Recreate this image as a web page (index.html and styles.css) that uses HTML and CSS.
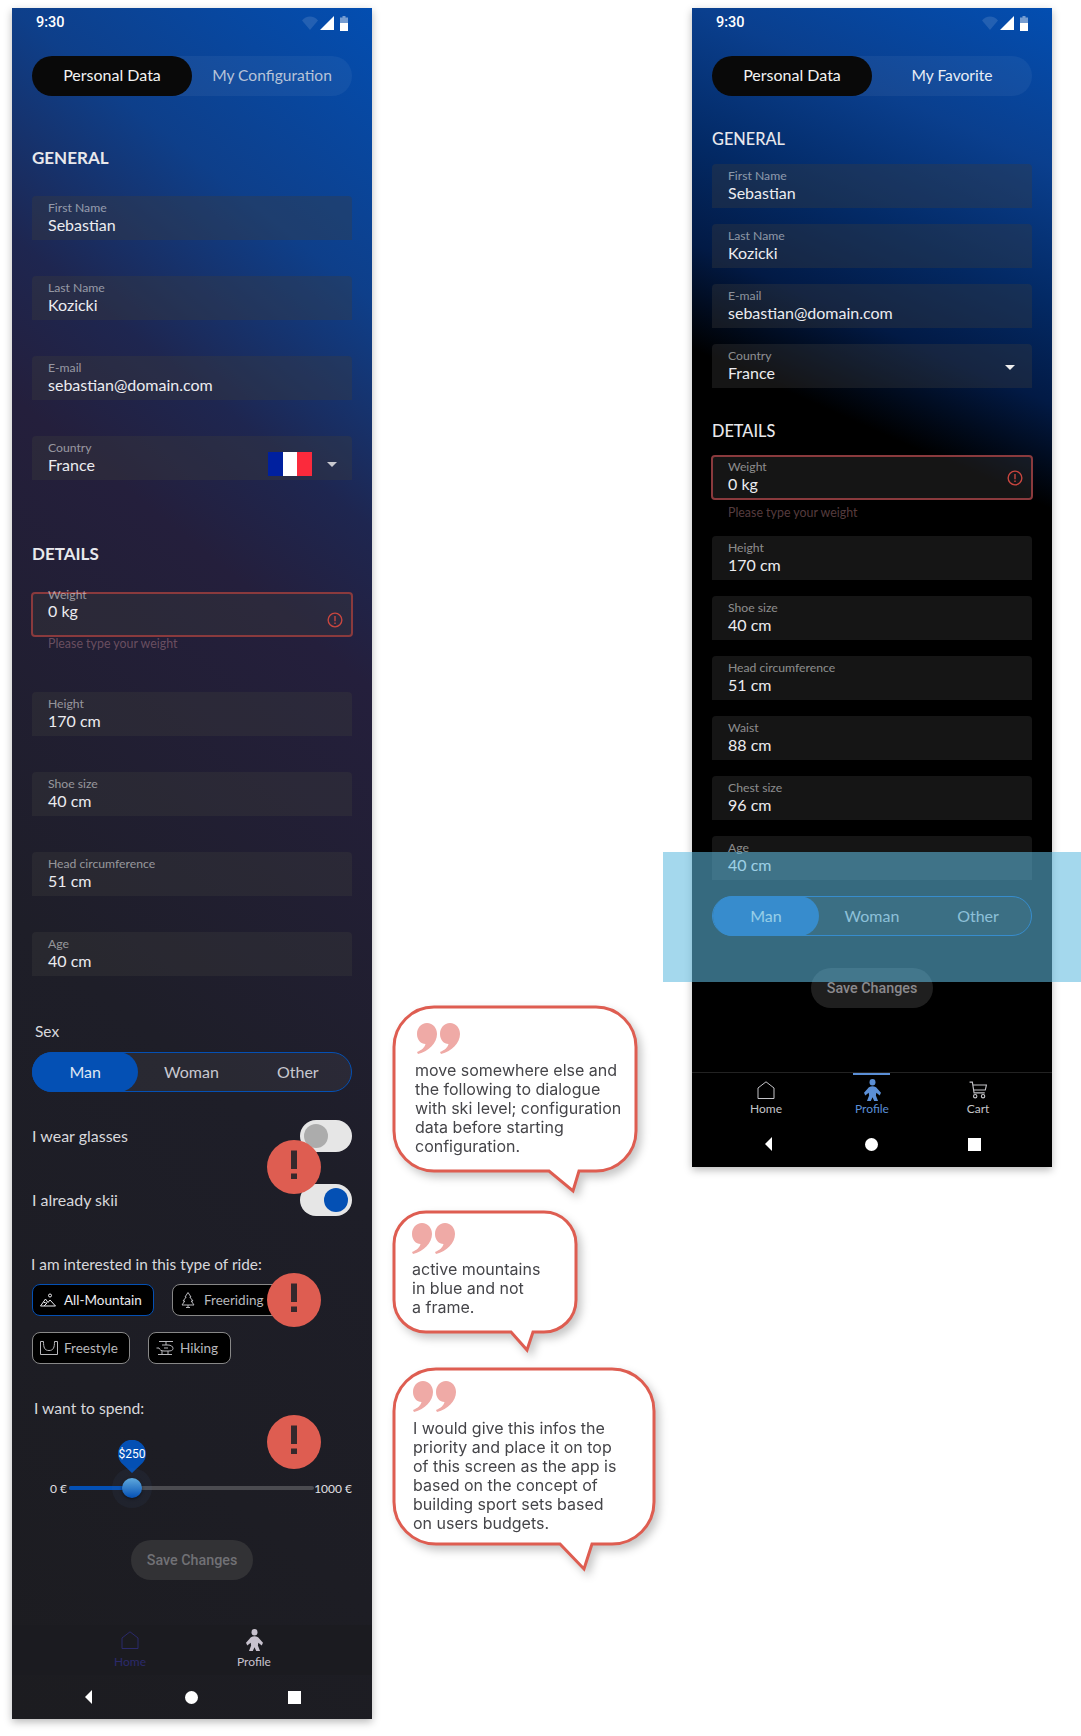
FILE: index.html
```html
<!DOCTYPE html>
<html lang="en">
<head>
<meta charset="utf-8">
<title>Profile screens</title>
<link rel="stylesheet" href="styles.css">
</head>
<body>
<svg class="defs" width="0" height="0" aria-hidden="true">
  <defs>
    <symbol id="wifi" viewBox="0 0 16 14"><path d="M0 4.500C2 2 5 .5 8 .5s6 1.500 8 4L8 14z" fill="#fff" fill-opacity=".12"/></symbol>
    <symbol id="signal" viewBox="0 0 14 14"><path d="M14 0V14H0z" fill="#fff"/></symbol>
    <symbol id="battery" viewBox="0 0 8 15"><path d="M2.500 0h3v1.500H8V7H0V1.500h2.500z" fill="#fff" fill-opacity=".45"/><path d="M0 7h8v8H0z" fill="#fff"/></symbol>
    <symbol id="home" viewBox="0 0 18 18"><path d="M1 17.500V7L9 .8 17 7v10.500z" fill="none" stroke="currentColor" stroke-width="1"/></symbol>
    <symbol id="person" viewBox="0 0 20 24" preserveAspectRatio="none"><circle cx="10" cy="3.500" r="3.500" fill="currentColor"/><path d="M10 8C7 8 5.500 9 4 11L0 15l1.500 3 4-3 .5 3-2.500 6H8l2-4 2 4h4.500L14 18l.5-3 4 3 1.500-3-4-4c-1.500-2-3-3-6-3z" fill="currentColor"/></symbol>
    <symbol id="cart" viewBox="0 0 16 16"><path d="M.5 1H3l1.500 9.500h9.500M3.500 3.500H15.500L14.500 8H4.200" fill="none" stroke="currentColor"/><circle cx="5.500" cy="13.500" r="1.500" fill="none" stroke="currentColor"/><circle cx="12.500" cy="13.500" r="1.500" fill="none" stroke="currentColor"/></symbol>
    <symbol id="alert" viewBox="0 0 14 14"><circle cx="7" cy="7" r="6" fill="none" stroke="currentColor" stroke-width="1.200"/><path d="M6.400 3.500h1.200v4.500H6.400zM6.400 9.200h1.200v1.300H6.400z" fill="currentColor"/></symbol>
    <symbol id="back" viewBox="0 0 7 14"><path d="M7 0V14L0 7z" fill="#fff"/></symbol>
    <symbol id="quote" viewBox="0 0 43 31"><path d="M10 0c6 0 10 5 10 11 0 9-8 17-19 20l-1-2c5-2 8-5 8.500-8C4 21 0 17 0 11 0 5 4 0 10 0zM33 0c6 0 10 5 10 11 0 9-8 17-19 20l-1-2c5-2 8-5 8.500-8C27 21 23 17 23 11c0-6 4-11 10-11z" fill="#efaaa6"/></symbol>
    <symbol id="mark" viewBox="0 0 54 54"><circle cx="27" cy="27" r="27" fill="#de5d51"/><path d="M24 10.500h6V29h-6zM24 33.500h6V39h-6z" fill="#36282c"/></symbol>
  </defs>
</svg>

<main class="canvas">
  <section class="phone phone-a">
    <div class="status"><span>9:30</span><span class="status-icons"><svg class="ic-wifi"><use href="#wifi"/></svg><svg class="ic-signal"><use href="#signal"/></svg><svg class="ic-batt"><use href="#battery"/></svg></span></div>
    <div class="tabs"><span class="tab tab-on">Personal Data</span><span class="tab tab-off">My Configuration</span></div>
    <h2 class="title title-bold title-a1">GENERAL</h2>
    <div class="fields fields-a">
      <div class="field"><span class="lab">First Name</span><span class="val">Sebastian</span></div>
      <div class="field"><span class="lab">Last Name</span><span class="val">Kozicki</span></div>
      <div class="field"><span class="lab">E-mail</span><span class="val">sebastian@domain.com</span></div>
      <div class="field field-row"><div><span class="lab">Country</span><span class="val">France</span></div><span class="flag"><i class="f1"></i><i class="f2"></i><i class="f3"></i></span><span class="caret"></span></div>
    </div>
    <h2 class="title title-bold title-a2">DETAILS</h2>
    <div class="fields fields-a">
      <div class="group">
        <div class="field field-err field-err-a"><span class="lab">Weight</span><span class="val">0 kg</span><svg class="err-ic err-ic-a"><use href="#alert"/></svg></div>
        <p class="err err-a">Please type your weight</p>
      </div>
      <div class="field"><span class="lab">Height</span><span class="val">170 cm</span></div>
      <div class="field"><span class="lab">Shoe size</span><span class="val">40 cm</span></div>
      <div class="field"><span class="lab">Head circumference</span><span class="val">51 cm</span></div>
      <div class="field"><span class="lab">Age</span><span class="val">40 cm</span></div>
    </div>
    <p class="text sex-label">Sex</p>
    <div class="segment"><span class="seg seg-on">Man</span><span class="seg">Woman</span><span class="seg">Other</span></div>
    <div class="switch-row row-1"><span class="text">I wear glasses</span><span class="toggle"><i class="knob knob-off"></i></span></div>
    <div class="switch-row row-2"><span class="text">I already skii</span><span class="toggle toggle-on"><i class="knob knob-on"></i></span></div>
    <p class="text ride-label">I am interested in this type of ride:</p>
    <div class="chips">
      <span class="chip chip-on"><svg class="chip-ic" viewBox="0 0 16 16" fill="none" stroke="currentColor"><path d="M.5 14 5.500 7l2.500 3.500L10 8l5.500 6zM3.500 10l2 1 1-1M4 14l3-3"/><circle cx="10" cy="3.500" r="1.500"/></svg>All-Mountain</span>
      <span class="chip chip-wide"><svg class="chip-ic" viewBox="0 0 16 16" fill="none" stroke="currentColor"><path d="M8 .5 11 5H9.800L13 9h-1.800l2.800 4H2l2.800-4H3l3.200-4H5zM8 13v3M6 15.500h4"/></svg>Freeriding</span>
      <span class="chip chip-3"><svg class="chip-ic chip-ic-l" viewBox="0 0 18 16" fill="none" stroke="currentColor"><path d="M.5 1.500v13h17v-13M.5 1.500h3c0 6 1 9 5.500 9s5.500-3 5.500-9h3"/></svg>Freestyle</span>
      <span class="chip chip-4"><svg class="chip-ic chip-ic-l" viewBox="0 0 18 16" fill="none" stroke="currentColor"><path d="M3 1.500h14M10 1.500V5M6 5h6c3 0 5 1.500 5 3.500S15 11 12 11H8C5 11 3.500 9.500 3 8H.5M8 8h4M2 14.500h14M6 11v3.500M12 11v3.500"/></svg>Hiking</span>
    </div>
    <p class="text spend-label">I want to spend:</p>
    <div class="slider">
      <span class="pin"><svg class="pin-shape" viewBox="0 0 28 33"><path d="M14 33 3.500 23A14 14 0 1 1 24.500 23z" fill="#0450b4"/></svg><span class="pin-text">$250</span></span>
      <span class="sl-min">0 €</span>
      <span class="track"><i class="track-fill"></i><i class="halo"></i><i class="thumb"></i></span>
      <span class="sl-max">1000 €</span>
    </div>
    <div class="save save-a">Save Changes</div>
    <nav class="bottom bottom-a">
      <span class="nav-item nav-home"><svg class="nav-ic"><use href="#home"/></svg>Home</span>
      <span class="nav-item nav-profile"><svg class="nav-ic nav-ic-p"><use href="#person"/></svg>Profile</span>
    </nav>
    <div class="sys"><svg class="sys-back"><use href="#back"/></svg><i class="sys-circle"></i><i class="sys-square"></i></div>
    <svg class="mark mark-1"><use href="#mark"/></svg>
    <svg class="mark mark-2"><use href="#mark"/></svg>
    <svg class="mark mark-3"><use href="#mark"/></svg>
  </section>

  <section class="phone phone-b">
    <div class="status"><span>9:30</span><span class="status-icons"><svg class="ic-wifi"><use href="#wifi"/></svg><svg class="ic-signal"><use href="#signal"/></svg><svg class="ic-batt"><use href="#battery"/></svg></span></div>
    <div class="tabs"><span class="tab tab-on">Personal Data</span><span class="tab tab-off tab-bright">My Favorite</span></div>
    <h2 class="title title-b1">GENERAL</h2>
    <div class="fields fields-b fields-b1">
      <div class="field"><span class="lab">First Name</span><span class="val">Sebastian</span></div>
      <div class="field"><span class="lab">Last Name</span><span class="val">Kozicki</span></div>
      <div class="field"><span class="lab">E-mail</span><span class="val">sebastian@domain.com</span></div>
      <div class="field field-row"><div><span class="lab">Country</span><span class="val">France</span></div><span class="caret caret-b"></span></div>
    </div>
    <h2 class="title title-b2">DETAILS</h2>
    <div class="fields fields-b fields-b2">
      <div class="group group-b">
        <div class="field field-err"><span class="lab">Weight</span><span class="val">0 kg</span><svg class="err-ic"><use href="#alert"/></svg></div>
        <p class="err err-b">Please type your weight</p>
      </div>
      <div class="field"><span class="lab">Height</span><span class="val">170 cm</span></div>
      <div class="field"><span class="lab">Shoe size</span><span class="val">40 cm</span></div>
      <div class="field"><span class="lab">Head circumference</span><span class="val">51 cm</span></div>
      <div class="field"><span class="lab">Waist</span><span class="val">88 cm</span></div>
      <div class="field"><span class="lab">Chest size</span><span class="val">96 cm</span></div>
      <div class="field"><span class="lab">Age</span><span class="val">40 cm</span></div>
    </div>
    <div class="segment segment-b"><span class="seg seg-on">Man</span><span class="seg">Woman</span><span class="seg">Other</span></div>
    <div class="save save-b">Save Changes</div>
    <nav class="bottom bottom-b">
      <span class="nav-item nav-plain"><svg class="nav-ic"><use href="#home"/></svg>Home</span>
      <span class="nav-item nav-active"><svg class="nav-ic nav-ic-p"><use href="#person"/></svg>Profile</span>
      <span class="nav-item nav-plain"><svg class="nav-ic"><use href="#cart"/></svg>Cart</span>
    </nav>
    <div class="sys"><svg class="sys-back"><use href="#back"/></svg><i class="sys-circle"></i><i class="sys-square"></i></div>
  </section>

  <aside class="bubble bubble-1">
    <svg class="bubble-shape" viewBox="0 0 248 190"><path d="M42 2H204a40 40 0 0 1 40 40V126a40 40 0 0 1-40 40H187L181 186 157 166H42a40 40 0 0 1-40-40V42A40 40 0 0 1 42 2z"/></svg>
    <svg class="quote"><use href="#quote"/></svg>
    <p class="bubble-text">move somewhere else and<br>the following to dialogue<br>with ski level; configuration<br>data before starting<br>configuration.</p>
  </aside>
  <aside class="bubble bubble-2">
    <svg class="bubble-shape" viewBox="0 0 187 143"><path d="M34 2H152a32 32 0 0 1 32 32V90a32 32 0 0 1-32 32H141L135 140 119 122H34a32 32 0 0 1-32-32V34A32 32 0 0 1 34 2z"/></svg>
    <svg class="quote"><use href="#quote"/></svg>
    <p class="bubble-text">active mountains<br>in blue and not<br>a frame.</p>
  </aside>
  <aside class="bubble bubble-3">
    <svg class="bubble-shape" viewBox="0 0 265 204"><path d="M44 2H220a42 42 0 0 1 42 42V135a42 42 0 0 1-42 42H200L192 202 168 177H44a42 42 0 0 1-42-42V44A42 42 0 0 1 44 2z"/></svg>
    <svg class="quote"><use href="#quote"/></svg>
    <p class="bubble-text">I would give this infos the<br>priority and place it on top<br>of this screen as the app is<br>based on the concept of<br>building sport sets based<br>on users budgets.</p>
  </aside>
  <div class="highlight"></div>
</main>
</body>
</html>
```
FILE: styles.css
```css
* { box-sizing: border-box; }
html, body { margin: 0; padding: 0; background: #fff; }
body { width: 1081px; height: 1736px; overflow: hidden; font-family: "Lato", "Noto Sans", sans-serif; }
.defs { position: absolute; }
p, h2 { margin: 0; }
i { display: block; }

.canvas { position: relative; width: 1081px; height: 1736px; display: flex; align-items: flex-start; gap: 320px; padding: 8px 0 0 12px; }

.phone { position: relative; flex: none; width: 360px; display: flex; flex-direction: column; padding: 0 20px; color: #e8e8ec; box-shadow: 0 3px 8px rgba(0,0,0,.28); }
.phone > * { flex: none; }
.phone-a { height: 1711px; background: linear-gradient(219deg, #034eb1 0%, #0e3f8a 14.6%, #1e2650 26%, #241f3c 34%, #1e1e28 60%, #1c1c20 100%); }
.phone-b { height: 1159px; background: linear-gradient(204deg, #034eb1 0%, #0a3f8e 12%, #032a66 22%, #021a45 30%, #000 38%, #000 100%); }

.status { height: 28px; margin: 0 -20px; padding: 0 24px; display: flex; justify-content: space-between; align-items: flex-start; font: 500 14.500px/29px Roboto, sans-serif; color: #fff; }
.status-icons { display: flex; align-items: flex-start; padding-top: 8px; }
.ic-wifi { width: 16px; height: 14px; margin-right: 2px; }
.ic-signal { width: 14px; height: 14px; margin-right: 6px; }
.ic-batt { width: 8px; height: 15px; }

.tabs { display: flex; height: 40px; margin-top: 20px; border-radius: 20px; background: rgba(255,255,255,.05); }
.tab { flex: 1; text-align: center; font-size: 16px; line-height: 39px; border-radius: 20px; }
.tab-on { background: #090909; color: #f2f2f2; line-height: 38px; }
.tab-off { font-size: 15.600px; color: #b7c3d8; }
.tab-bright { color: #e8edf5; }

.title { font-size: 16.300px; line-height: 24px; font-weight: 500; color: #e8e8ec; }
.title-bold { font-size: 17px; font-weight: 700; }
.title-a1 { margin-top: 50px; }
.title-a2 { margin-top: 62px; }
.title-b1 { margin-top: 31px; }
.title-b2 { margin-top: 31px; }

.fields { display: flex; flex-direction: column; }
.fields > * { flex: none; }
.fields-a { gap: 36px; margin-top: 26px; }
.fields-b { gap: 16px; }
.fields-b1 { margin-top: 13px; }
.fields-b2 { margin-top: 12px; }
.group { height: 64px; }
.group-b { height: 65px; }

.field { position: relative; height: 44px; padding: 4px 16px 0; background: rgba(60,60,60,.35); border-radius: 4px 4px 0 0; }
.field-row { display: flex; align-items: flex-start; }
.field-row > div { flex: 1; }
.lab { display: block; font-size: 12.200px; line-height: 15px; color: rgba(255,255,255,.52); }
.val { display: block; font-size: 16px; line-height: 20px; color: #ececf0; }
.flag { display: flex; width: 44px; height: 24px; margin: 12px 15px 0 0; }
.flag i { flex: 1; }
.f1 { background: #00209f; }
.f2 { background: #fff; }
.f3 { background: #fb2a3c; }
.caret { width: 0; height: 0; margin: 22px -1px 0 0; border-left: 5px solid transparent; border-right: 5px solid transparent; border-top: 5px solid #c9c9cf; }
.caret-b { margin: 17px 1px 0 0; border-top-color: #eee; }

.field-err { height: 45px; margin: 0 -1px; padding: 2px 15px 0; border: 2px solid #8a3a3d; border-radius: 4px; }
.field-err-a { padding-top: 0; }
.field-err-a .lab { margin-top: -7.500px; }
.field-err-a .val { margin-top: -1px; }
.err-ic { position: absolute; right: 8px; top: 13px; width: 16px; height: 16px; color: #c9463f; }
.err-ic-a { top: 18px; }
.err { font-size: 12.400px; line-height: 16px; margin-left: 16px; color: rgba(224,160,170,.38); }
.err-a { margin-top: -1px; }
.err-b { margin-top: 5px; }

.text { font-size: 16px; line-height: 24px; color: #d8d8dc; }
.sex-label { margin: 45px 0 0 3px; line-height: 20px; font-size: 15.500px; }
.segment { display: flex; height: 40px; margin-top: 11px; border: 1px solid #0450b4; border-radius: 20px; background: rgba(255,255,255,.05); }
.segment-b { margin-top: 16px; }
.seg { flex: 1; text-align: center; font-size: 16px; line-height: 37px; color: #c8c8d0; }
.seg-on { margin: -1px 0 -1px -1px; line-height: 39px; background: #0450b4; color: #dfe7f3; border-radius: 20px; }
.segment-b .seg-on { margin-left: 0; }

.switch-row { display: flex; justify-content: space-between; align-items: center; height: 32px; }
.row-1 { margin-top: 28px; }
.row-2 { margin-top: 32px; }
.toggle { display: flex; width: 52px; height: 32px; padding: 4px; border-radius: 16px; background: #e6e6e6; }
.toggle-on { justify-content: flex-end; }
.knob { width: 24px; height: 24px; border-radius: 50%; }
.knob-off { background: #acacac; }
.knob-on { background: #0450b4; }

.ride-label { margin: 36px 0 0 -1px; font-size: 15.400px; }
.chips { display: flex; flex-wrap: wrap; column-gap: 18px; row-gap: 16px; margin-top: 8px; width: 320px; }
.chip { display: flex; align-items: center; height: 32px; padding: 0 0 0 7px; background: #000; border: 1px solid #888; border-radius: 8px; font-size: 13.500px; white-space: nowrap; color: #b8b8bc; }
.chip-on { width: 122px; border-color: #0450b4; color: #ececf0; }
.chip-wide { width: 120px; }
.chip-3 { width: 98px; }
.chip-4 { width: 83px; }
.chip-ic { width: 16px; height: 16px; margin-right: 8px; flex: none; }
.chip-ic-l { width: 18px; margin-right: 6px; }

.spend-label { margin: 32px 0 0 2px; font-size: 15.700px; }
.slider { position: relative; display: flex; align-items: center; height: 24px; margin: 56px 0 0 18px; font-size: 12px; color: #e0e0e4; }
.sl-min { width: 19px; white-space: nowrap; }
.sl-max { width: 38px; text-align: right; white-space: nowrap; }
.track { position: relative; flex: 1; height: 4px; border-radius: 2px; background: #4b4b50; }
.track-fill { position: absolute; left: 0; top: 0; width: 63px; height: 4px; border-radius: 2px 0 0 2px; background: #0450b4; }
.halo { position: absolute; left: 43px; top: -18px; width: 40px; height: 40px; border-radius: 50%; background: rgba(80,120,170,.08); }
.thumb { position: absolute; left: 53px; top: -8px; width: 20px; height: 20px; border-radius: 50%; background: linear-gradient(180deg, #5fa9dd, #0450b4); box-shadow: 0 1px 3px rgba(0,0,0,.5); }
.pin { position: absolute; left: 68px; top: -36px; width: 28px; height: 33px; }
.pin-shape { position: absolute; inset: 0; width: 28px; height: 33px; }
.pin-text { position: absolute; left: 0; right: 0; top: 6px; text-align: center; font: 12px/16px Roboto, sans-serif; color: #fff; }

.save { align-self: center; width: 122px; height: 40px; border-radius: 20px; background: #323235; color: #717175; font: 500 14.300px/40px Roboto, sans-serif; text-align: center; }
.save-a { margin-top: 40px; }
.save-b { margin-top: 32px; background: rgba(255,255,255,.12); color: #8a8a8e; }

.bottom { margin: 0 -20px; display: grid; }
.bottom-a { margin-top: 45px; height: 50px; padding: 0 56px; grid-template-columns: 124px 124px; background: #1b1b20; }
.bottom-b { margin-top: 64px; height: 50px; padding: 0 21px; grid-template-columns: repeat(3, 1fr); border-top: 1px solid #222; }
.nav-item { position: relative; display: flex; flex-direction: column; align-items: center; padding-top: 6px; font-size: 12px; line-height: 14px; }
.nav-ic { width: 18px; height: 18px; margin-bottom: 6px; flex: none; }
.nav-ic-p { width: 17px; height: 22px; margin: -2px 0 4px; }
.bottom-b .nav-item { padding-top: 8px; }
.bottom-b .nav-ic { margin-bottom: 3px; }
.bottom-b .nav-ic-p { margin: -2px 0 1px; }
.nav-home { color: #2b2a6b; }
.nav-profile { color: #c8c2ce; }
.nav-plain { color: #c4c4c8; }
.nav-active { color: #5b8fd6; }
.nav-active::before { content: ""; position: absolute; top: 0; left: 34px; width: 37px; height: 2px; background: #5b8fd6; }

.sys { display: flex; align-items: center; height: 44px; margin: 0 -20px; padding-left: 73px; }
.sys-back { width: 7px; height: 14px; }
.sys-circle { width: 13px; height: 13px; margin-left: 93px; border-radius: 50%; background: #fff; }
.sys-square { width: 13px; height: 13px; margin-left: 90px; background: #fff; }

.mark { position: absolute; left: 255px; width: 54px; height: 54px; }
.mark-1 { top: 1132px; }
.mark-2 { top: 1265px; }
.mark-3 { top: 1407px; }

.bubble { position: absolute; filter: drop-shadow(4px 5px 4px rgba(0,0,0,.22)); }
.bubble-shape { position: absolute; left: 0; top: 0; width: 100%; height: 100%; fill: #fff; stroke: #de5d51; stroke-width: 3; overflow: visible; }
.quote { position: absolute; width: 43px; height: 31px; }
.bubble-text { position: absolute; white-space: nowrap; font: 400 16px/19px Inter, sans-serif; color: #454549; }
.bubble-1 { left: 392px; top: 1005px; width: 248px; height: 190px; }
.bubble-1 .quote { left: 25px; top: 18px; }
.bubble-1 .bubble-text { left: 23px; top: 56px; }
.bubble-2 { left: 392px; top: 1210px; width: 187px; height: 143px; }
.bubble-2 .quote { left: 20px; top: 13px; }
.bubble-2 .bubble-text { left: 20px; top: 50px; }
.bubble-3 { left: 392px; top: 1367px; width: 265px; height: 204px; }
.bubble-3 .quote { left: 21px; top: 14px; }
.bubble-3 .bubble-text { left: 21px; top: 52px; }

.highlight { position: absolute; left: 663px; top: 852px; width: 418px; height: 130px; background: rgba(95,186,223,.57); }
```
